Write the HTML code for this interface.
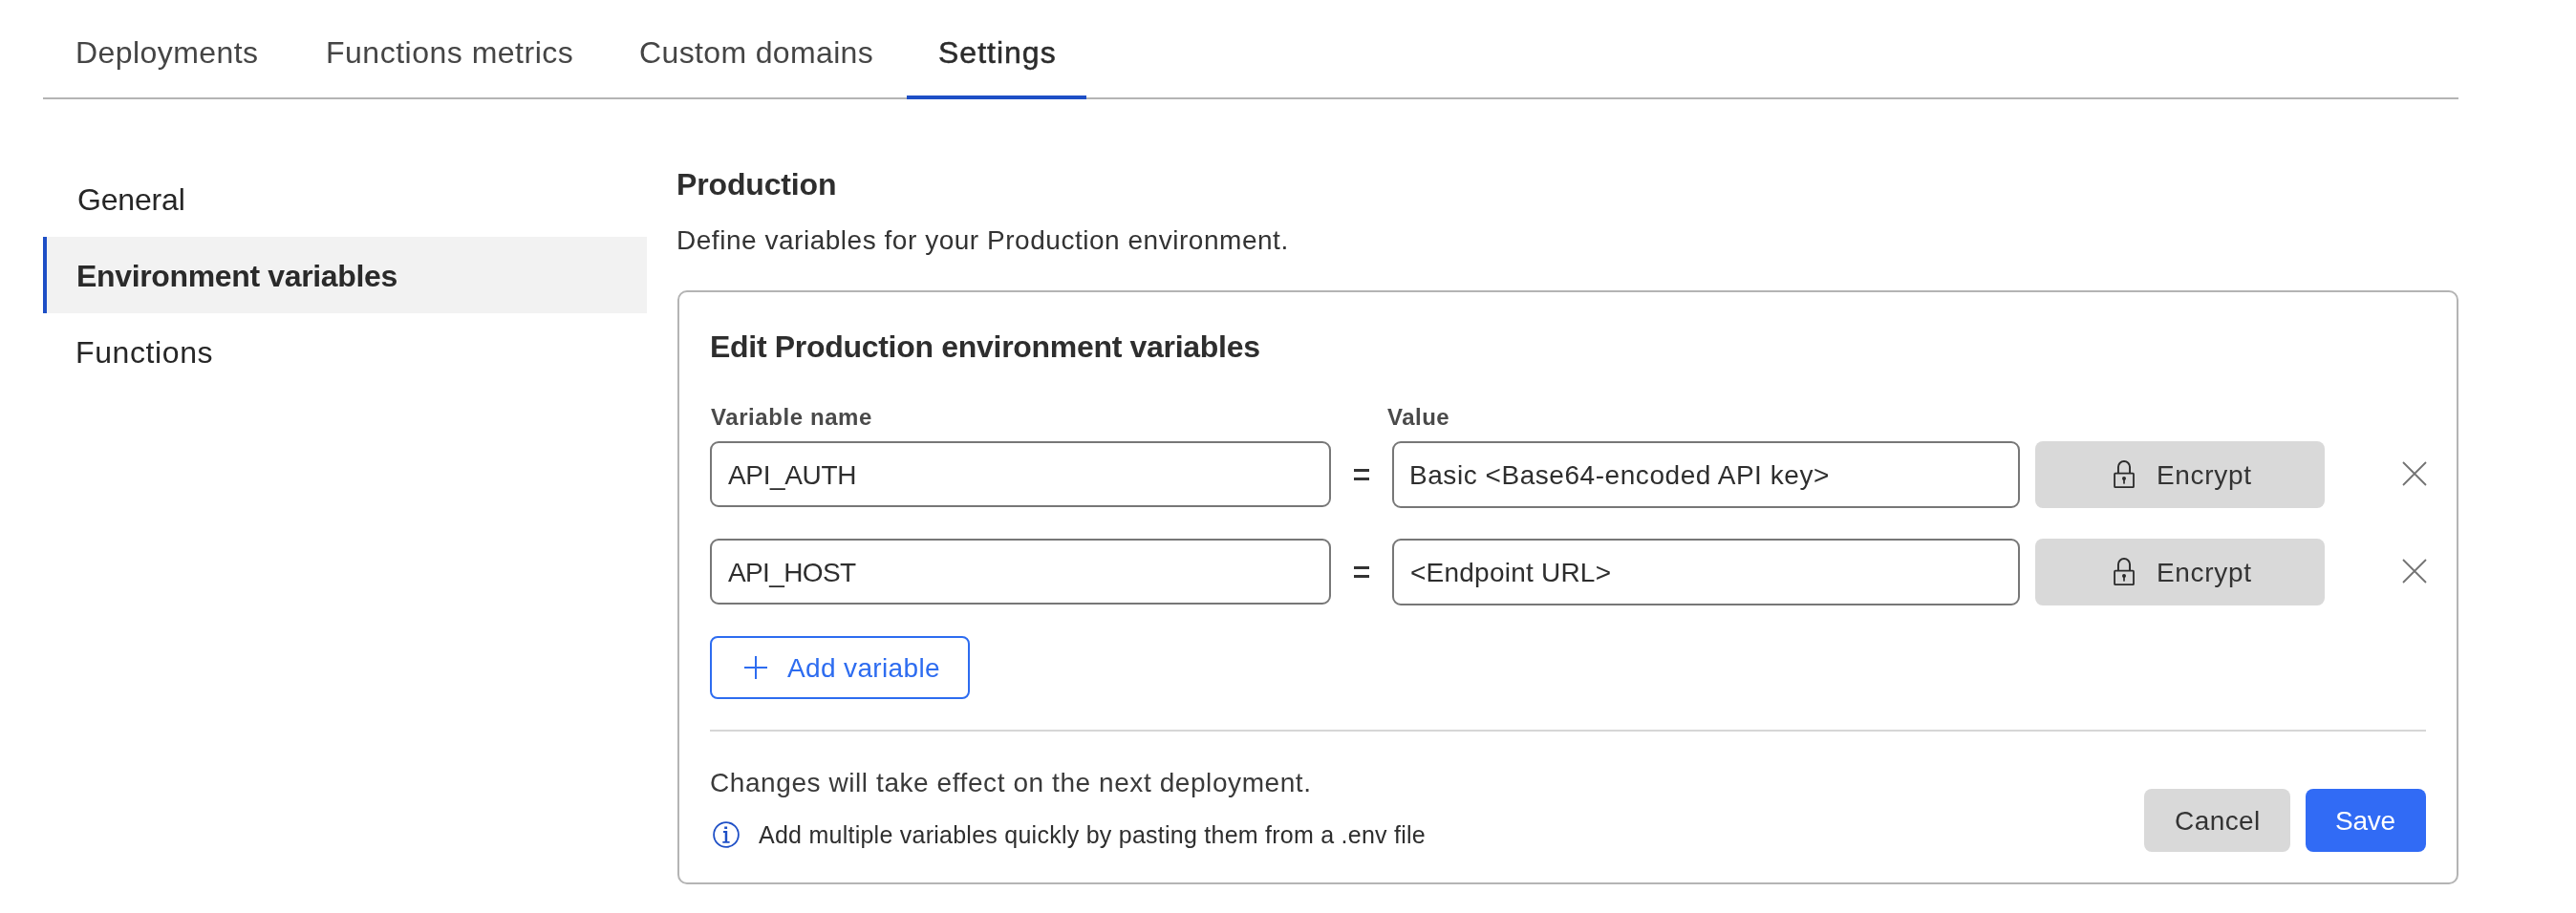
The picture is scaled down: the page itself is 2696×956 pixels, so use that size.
<!DOCTYPE html>
<html>
<head>
<meta charset="utf-8">
<style>
html,body{margin:0;padding:0;background:#fff;}
body{width:2696px;height:956px;position:relative;overflow:hidden;font-family:"Liberation Sans",sans-serif;}
.t{position:absolute;white-space:pre;line-height:normal;will-change:transform;}
.b{position:absolute;box-sizing:border-box;}
.tab{font-size:32px;color:#454545;}
.r28{font-size:28px;color:#333;}
</style>
</head>
<body>
<!-- tabs -->
<div class="t tab" style="left:79px;top:37px;letter-spacing:0.43px">Deployments</div>
<div class="t tab" style="left:340.5px;top:37px;letter-spacing:0.5px">Functions metrics</div>
<div class="t tab" style="left:669px;top:37px;letter-spacing:0.36px">Custom domains</div>
<div class="t tab" style="left:982px;top:37px;letter-spacing:1px;color:#2b2b2b;-webkit-text-stroke:0.5px #2b2b2b">Settings</div>
<div class="b" style="left:45px;top:102px;width:2528px;height:2px;background:#b4b4b4"></div>
<div class="b" style="left:949px;top:100px;width:188px;height:4px;background:#1e4fc6"></div>

<!-- sidebar -->
<div class="t" style="left:80.5px;top:191px;font-size:32px;color:#262626;letter-spacing:-0.17px">General</div>
<div class="b" style="left:45px;top:248px;width:632px;height:80px;background:#f2f2f2;border-left:4px solid #1e4fc6"></div>
<div class="t" style="left:80px;top:271px;font-size:32px;font-weight:700;color:#2a2a2a;letter-spacing:-0.35px">Environment variables</div>
<div class="t" style="left:79px;top:351px;font-size:32px;color:#262626;letter-spacing:0.6px">Functions</div>

<!-- content header -->
<div class="t" style="left:708px;top:175px;font-size:32px;font-weight:700;color:#2e2e2e;letter-spacing:-0.15px">Production</div>
<div class="t r28" style="left:708px;top:236px;letter-spacing:0.53px">Define variables for your Production environment.</div>

<!-- card -->
<div class="b" style="left:709px;top:304px;width:1864px;height:622px;border:2px solid #b4b4b4;border-radius:10px"></div>
<div class="t" style="left:743px;top:345px;font-size:32px;font-weight:700;color:#2e2e2e;letter-spacing:-0.3px">Edit Production environment variables</div>
<div class="t" style="left:744px;top:423px;font-size:24px;font-weight:700;color:#4a4a4a;letter-spacing:0.58px">Variable name</div>
<div class="t" style="left:1452px;top:423px;font-size:24px;font-weight:700;color:#4a4a4a;letter-spacing:0.5px">Value</div>

<!-- row 1 -->
<div class="b" style="left:743px;top:462px;width:650px;height:69px;border:2px solid #777;border-radius:9px"></div>
<div class="t r28" style="left:762px;top:482px;color:#2e2e2e;letter-spacing:-0.36px">API_AUTH</div>
<div class="b" style="left:1417px;top:491px;width:16px;height:3px;background:#333"></div>
<div class="b" style="left:1417px;top:500px;width:16px;height:3px;background:#333"></div>
<div class="b" style="left:1457px;top:462px;width:657px;height:70px;border:2px solid #777;border-radius:9px"></div>
<div class="t r28" style="left:1475px;top:482px;color:#2e2e2e;letter-spacing:0.55px">Basic &lt;Base64-encoded API key&gt;</div>
<div class="b" style="left:2130px;top:462px;width:303px;height:70px;background:#d9d9d9;border-radius:8px"></div>
<svg class="b" style="left:2210px;top:480px" width="26" height="34" viewBox="0 0 26 34">
  <path d="M6.95 15.6 V9 A6.05 6.05 0 0 1 19.05 9 V15.6" fill="none" stroke="#2b2b2b" stroke-width="1.9"/>
  <rect x="3.1" y="15.6" width="19.9" height="14.6" rx="0.8" fill="none" stroke="#2b2b2b" stroke-width="1.8"/>
  <circle cx="13" cy="20.9" r="2" fill="#2b2b2b"/>
  <rect x="12.15" y="21" width="1.7" height="5.6" fill="#2b2b2b"/>
</svg>
<div class="t r28" style="left:2257px;top:482px;letter-spacing:0.67px">Encrypt</div>
<svg class="b" style="left:2513px;top:482px" width="28" height="28" viewBox="0 0 28 28">
  <path d="M2 2 L26 26 M26 2 L2 26" stroke="#737373" stroke-width="1.8"/>
</svg>

<!-- row 2 -->
<div class="b" style="left:743px;top:564px;width:650px;height:69px;border:2px solid #777;border-radius:9px"></div>
<div class="t r28" style="left:762px;top:584px;color:#2e2e2e;letter-spacing:-0.63px">API_HOST</div>
<div class="b" style="left:1417px;top:593px;width:16px;height:3px;background:#333"></div>
<div class="b" style="left:1417px;top:602px;width:16px;height:3px;background:#333"></div>
<div class="b" style="left:1457px;top:564px;width:657px;height:70px;border:2px solid #777;border-radius:9px"></div>
<div class="t r28" style="left:1476px;top:584px;color:#2e2e2e;letter-spacing:0.23px">&lt;Endpoint URL&gt;</div>
<div class="b" style="left:2130px;top:564px;width:303px;height:70px;background:#d9d9d9;border-radius:8px"></div>
<svg class="b" style="left:2210px;top:582px" width="26" height="34" viewBox="0 0 26 34">
  <path d="M6.95 15.6 V9 A6.05 6.05 0 0 1 19.05 9 V15.6" fill="none" stroke="#2b2b2b" stroke-width="1.9"/>
  <rect x="3.1" y="15.6" width="19.9" height="14.6" rx="0.8" fill="none" stroke="#2b2b2b" stroke-width="1.8"/>
  <circle cx="13" cy="20.9" r="2" fill="#2b2b2b"/>
  <rect x="12.15" y="21" width="1.7" height="5.6" fill="#2b2b2b"/>
</svg>
<div class="t r28" style="left:2257px;top:584px;letter-spacing:0.67px">Encrypt</div>
<svg class="b" style="left:2513px;top:584px" width="28" height="28" viewBox="0 0 28 28">
  <path d="M2 2 L26 26 M26 2 L2 26" stroke="#737373" stroke-width="1.8"/>
</svg>

<!-- add variable -->
<div class="b" style="left:743px;top:666px;width:272px;height:66px;border:2px solid #2d6cf0;border-radius:8px"></div>
<svg class="b" style="left:779px;top:687px" width="24" height="24" viewBox="0 0 24 24">
  <path d="M12 0 V24 M0 12 H24" stroke="#2d6cf0" stroke-width="2"/>
</svg>
<div class="t r28" style="left:824px;top:684px;color:#2d6cf0;letter-spacing:0.36px">Add variable</div>

<div class="b" style="left:743px;top:764px;width:1796px;height:2px;background:#d6d6d6"></div>

<!-- footer -->
<div class="t r28" style="left:743px;top:804px;color:#3a3a3a;letter-spacing:0.577px">Changes will take effect on the next deployment.</div>
<svg class="b" style="left:745px;top:859px" width="30" height="30" viewBox="0 0 30 30">
  <circle cx="15" cy="15" r="12.9" fill="none" stroke="#1e4fc6" stroke-width="1.8"/>
  <path d="M13.2 6.5 h2.9 v2.6 h-2.9 z M12 11.1 h4.2 v10.9 h2.4 v1.8 h-7.3 v-1.8 h2.4 v-9.1 h-1.7 z" fill="#1e4fc6"/>
</svg>
<div class="t" style="left:794px;top:860px;font-size:25px;color:#2e2e2e;letter-spacing:0.25px">Add multiple variables quickly by pasting them from a .env file</div>

<div class="b" style="left:2244px;top:826px;width:153px;height:66px;background:#d9d9d9;border-radius:8px"></div>
<div class="t r28" style="left:2276px;top:844px;letter-spacing:0.42px">Cancel</div>
<div class="b" style="left:2413px;top:826px;width:126px;height:66px;background:#316bf5;border-radius:8px"></div>
<div class="t r28" style="left:2444px;top:844px;color:#fff;letter-spacing:-0.23px">Save</div>
</body>
</html>
